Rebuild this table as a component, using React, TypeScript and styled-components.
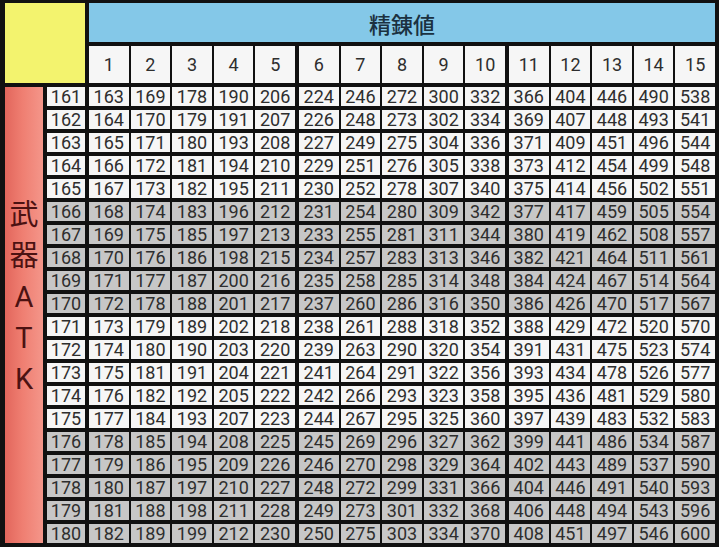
import styled, { createGlobalStyle } from "styled-components";

const values: number[][] = [
  [163, 169, 178, 190, 206, 224, 246, 272, 300, 332, 366, 404, 446, 490, 538],
  [164, 170, 179, 191, 207, 226, 248, 273, 302, 334, 369, 407, 448, 493, 541],
  [165, 171, 180, 193, 208, 227, 249, 275, 304, 336, 371, 409, 451, 496, 544],
  [166, 172, 181, 194, 210, 229, 251, 276, 305, 338, 373, 412, 454, 499, 548],
  [167, 173, 182, 195, 211, 230, 252, 278, 307, 340, 375, 414, 456, 502, 551],
  [168, 174, 183, 196, 212, 231, 254, 280, 309, 342, 377, 417, 459, 505, 554],
  [169, 175, 185, 197, 213, 233, 255, 281, 311, 344, 380, 419, 462, 508, 557],
  [170, 176, 186, 198, 215, 234, 257, 283, 313, 346, 382, 421, 464, 511, 561],
  [171, 177, 187, 200, 216, 235, 258, 285, 314, 348, 384, 424, 467, 514, 564],
  [172, 178, 188, 201, 217, 237, 260, 286, 316, 350, 386, 426, 470, 517, 567],
  [173, 179, 189, 202, 218, 238, 261, 288, 318, 352, 388, 429, 472, 520, 570],
  [174, 180, 190, 203, 220, 239, 263, 290, 320, 354, 391, 431, 475, 523, 574],
  [175, 181, 191, 204, 221, 241, 264, 291, 322, 356, 393, 434, 478, 526, 577],
  [176, 182, 192, 205, 222, 242, 266, 293, 323, 358, 395, 436, 481, 529, 580],
  [177, 184, 193, 207, 223, 244, 267, 295, 325, 360, 397, 439, 483, 532, 583],
  [178, 185, 194, 208, 225, 245, 269, 296, 327, 362, 399, 441, 486, 534, 587],
  [179, 186, 195, 209, 226, 246, 270, 298, 329, 364, 402, 443, 489, 537, 590],
  [180, 187, 197, 210, 227, 248, 272, 299, 331, 366, 404, 446, 491, 540, 593],
  [181, 188, 198, 211, 228, 249, 273, 301, 332, 368, 406, 448, 494, 543, 596],
  [182, 189, 199, 212, 230, 250, 275, 303, 334, 370, 408, 451, 497, 546, 600],
];

// data columns sit after red / spacer / label / spacer, with a 0px spacer track every 5 columns
const dataCol = (i: number) => 5 + i + Math.floor(i / 5);

const GlobalStyle = createGlobalStyle`
  body {
    margin: 0;
    background: #ffffff;
    font-family: Roboto, "Noto Sans CJK JP", sans-serif;
  }
`;

const Table = styled.div`
  width: 719px;
  height: 547px;
  box-sizing: border-box;
  padding: 3px 4px 4px 5px;
  background: #111111;
  display: grid;
  grid-template-columns: 38px 0 38px 0 repeat(5, 1fr) 0 repeat(5, 1fr) 0 repeat(5, 1fr);
  grid-template-rows: 39px 37px repeat(20, 19px);
  column-gap: 2px;
  row-gap: 4px;
`;

const Corner = styled.div`
  grid-column: 1 / 4;
  grid-row: 1 / 3;
  background: #f3f36e;
`;

const Heading = styled.div`
  grid-column: 5 / 22;
  grid-row: 1;
  background: #84c8e8;
  display: flex;
  align-items: center;
  justify-content: center;
  font-family: "Noto Sans CJK JP", sans-serif;
  font-size: 22px;
  font-weight: 500;
  color: #1b3140;
`;

const Cell = styled.div<{ $col: number; $row: number; $shade?: boolean }>`
  grid-column: ${(p) => p.$col};
  grid-row: ${(p) => p.$row};
  background: ${(p) => (p.$shade ? "#c7c7c7" : "#f6f6f6")};
  display: flex;
  align-items: center;
  justify-content: center;
  font-size: 18px;
  line-height: 1;
  color: #2e2e2e;
  overflow: hidden;
`;

const Side = styled.div`
  grid-column: 1;
  grid-row: 3 / 23;
  background: linear-gradient(90deg, #e2665c 0%, #ef7e71 45%, #f4968a 100%);
  display: flex;
  flex-direction: column;
  align-items: center;
  justify-content: center;
  padding-bottom: 36px;
`;

const SideChar = styled.span`
  font-family: Roboto, "Noto Sans CJK JP", sans-serif;
  font-size: 29px;
  line-height: 41px;
  color: #4c1212;
`;

export default function App() {
  return (
    <>
      <GlobalStyle />
      <Table>
        <Corner />
        <Heading>精錬値</Heading>
        {Array.from({ length: 15 }, (_, i) => (
          <Cell key={`h${i}`} $col={dataCol(i)} $row={2}>
            {i + 1}
          </Cell>
        ))}
        <Side>
          {"武器ATK".split("").map((c, i) => (
            <SideChar key={i}>{c}</SideChar>
          ))}
        </Side>
        {values.map((row, r) => {
          const shade = Math.floor(r / 5) % 2 === 1;
          return [
            <Cell key={`l${r}`} $col={3} $row={3 + r} $shade={shade}>
              {161 + r}
            </Cell>,
            ...row.map((v, i) => (
              <Cell key={`c${r}-${i}`} $col={dataCol(i)} $row={3 + r} $shade={shade}>
                {v}
              </Cell>
            )),
          ];
        })}
      </Table>
    </>
  );
}
